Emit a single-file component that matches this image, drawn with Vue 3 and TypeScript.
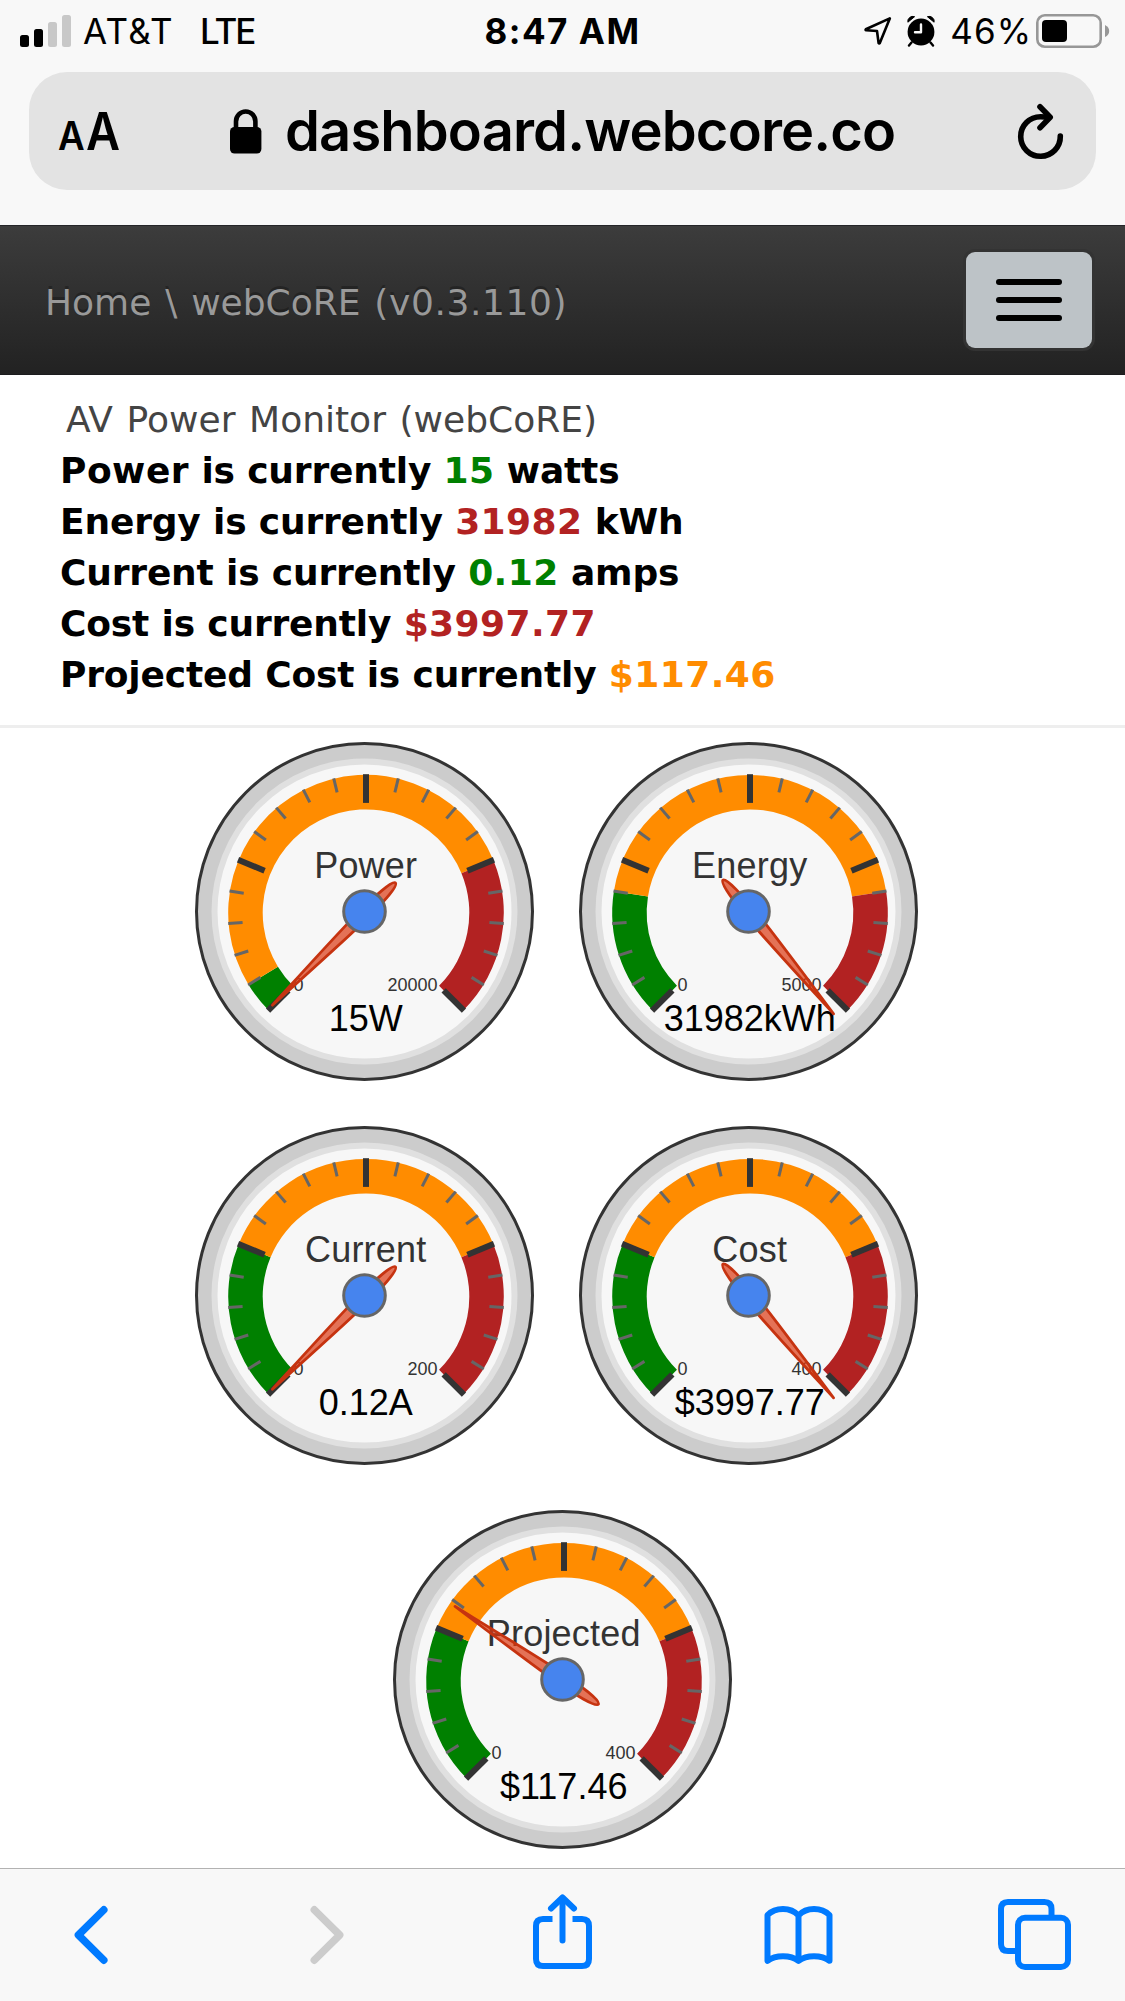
<script setup lang="ts">
interface Band {
  from: number
  to: number
  color: string
}

interface Gauge {
  title: string
  label: string
  value: number
  max: number
  green: number
  red: number
}

interface Reading {
  name: string
  value: string
  unit: string
  tone: string
}

const readings: Reading[] = [
  { name: 'Power', value: '15', unit: ' watts', tone: 'ok' },
  { name: 'Energy', value: '31982', unit: ' kWh', tone: 'high' },
  { name: 'Current', value: '0.12', unit: ' amps', tone: 'ok' },
  { name: 'Cost', value: '$3997.77', unit: '', tone: 'high' },
  { name: 'Projected Cost', value: '$117.46', unit: '', tone: 'warn' },
]

const gaugeRows: Gauge[][] = [
  [
    { title: 'Power', label: '15W', value: 15, max: 20000, green: 0.05, red: 0.75 },
    { title: 'Energy', label: '31982kWh', value: 31982, max: 5000, green: 0.2, red: 0.8 },
  ],
  [
    { title: 'Current', label: '0.12A', value: 0.12, max: 200, green: 0.25, red: 0.75 },
    { title: 'Cost', label: '$3997.77', value: 3997.77, max: 400, green: 0.25, red: 0.75 },
  ],
  [{ title: 'Projected', label: '$117.46', value: 117.46, max: 400, green: 0.25, red: 0.75 }],
]

// The dial sweeps 270 degrees clockwise, starting at the lower left.
const START = 135
const SWEEP = 270

const angleOf = (fraction: number): number => START + SWEEP * fraction

const point = (radius: number, fraction: number): string => {
  const a = (angleOf(fraction) * Math.PI) / 180
  return `${(radius * Math.cos(a)).toFixed(2)} ${(radius * Math.sin(a)).toFixed(2)}`
}

const bandPath = ({ from, to }: Band): string => {
  const outer = 137.8
  const inner = 103.3
  const large = (to - from) * SWEEP > 180 ? 1 : 0
  return (
    `M${point(outer, from)}A${outer} ${outer} 0 ${large} 1 ${point(outer, to)}` +
    `L${point(inner, to)}A${inner} ${inner} 0 ${large} 0 ${point(inner, from)}Z`
  )
}

const bandsOf = (g: Gauge): Band[] => [
  { from: 0, to: g.green, color: '#008000' },
  { from: g.green, to: g.red, color: '#ff8c00' },
  { from: g.red, to: 1, color: '#b22222' },
]

// Values beyond the scale rest slightly past the last tick.
const needleAngle = (g: Gauge): number => angleOf(Math.min(g.value / g.max, 1.02))

const ticks = Array.from({ length: 21 }, (_, i) => ({ angle: angleOf(i / 20), major: i % 5 === 0 }))
const minorTicks = ticks.filter((t) => !t.major)
const majorTicks = ticks.filter((t) => t.major)
</script>

<template>
  <div class="screen">
    <header class="chrome">
      <div class="status">
        <div class="side">
          <svg class="signal" width="51" height="32" viewBox="0 0 51 32">
            <rect x="0" y="20" width="9" height="12" rx="2.5" />
            <rect x="14" y="14" width="9" height="18" rx="2.5" />
            <rect class="weak" x="28" y="7" width="9" height="25" rx="2.5" />
            <rect class="weak" x="42" y="0" width="9" height="32" rx="2.5" />
          </svg>
          <span class="carrier">AT&amp;T</span>
          <span class="network">LTE</span>
        </div>
        <div class="clock">8:47 AM</div>
        <div class="side right">
          <svg class="location" width="28" height="30" viewBox="0 0 28 30">
            <path d="M25.8 2.4 L1.8 13.3 Q1.2 14 2.2 14.2 L13 15 L14.6 27 Q15.2 28 15.8 27 Z" fill="none" stroke="#000" stroke-width="2.6" stroke-linejoin="round" />
          </svg>
          <svg class="alarm" width="28" height="32" viewBox="0 0 28 32">
            <circle cx="14" cy="17" r="13.4" />
            <path d="M.9 7.2A5 5 0 0 1 7.6 1.7Z M27.1 7.2A5 5 0 0 0 20.4 1.7Z" stroke="#000" stroke-linejoin="round" />
            <path d="M4.5 27.5 2 30.5M23.5 27.5 26 30.5" stroke="#000" stroke-width="2.4" stroke-linecap="round" />
            <path d="M14 9.5V17.3H8" fill="none" stroke="#f8f8f8" stroke-width="2.4" stroke-linecap="round" stroke-linejoin="round" />
          </svg>
          <span class="percent">46%</span>
          <svg class="battery" width="74" height="34" viewBox="0 0 74 34">
            <rect x="1.3" y="1.3" width="63.4" height="31.4" rx="7.5" fill="none" stroke="#979797" stroke-width="2.6" />
            <rect x="6" y="6" width="25" height="22" rx="4" />
            <path d="M69 11Q73.2 13 73.2 17T69 23Z" fill="#979797" />
          </svg>
        </div>
      </div>
      <div class="address">
        <div class="reader"><span class="small">A</span><span class="large">A</span></div>
        <div class="site">
          <svg class="lock" width="32" height="45" viewBox="0 0 32 45">
            <rect x="0" y="18" width="31.4" height="26.6" rx="4.5" />
            <path d="M6 19V12.5a9.7 10 0 0 1 19.4 0V19" fill="none" stroke="#000" stroke-width="4.6" />
          </svg>
          <span class="url">dashboard.webcore.co</span>
        </div>
        <svg class="reload" width="50" height="60" viewBox="0 0 50 60">
          <g fill="none" stroke="#000" stroke-width="5.6" stroke-linecap="round" stroke-linejoin="round">
            <path d="M33.5 16.6Q30 15.7 25.5 15.7A19.8 19.8 0 1 0 45.3 35" />
            <path d="M25 5.8 35.2 16.3 25 26.7" />
          </g>
        </svg>
      </div>
    </header>

    <nav class="navbar">
      <span class="crumbs">Home \ webCoRE <span class="version">(v0.3.110)</span></span>
      <button class="menu" type="button" aria-label="Menu"><i></i><i></i><i></i></button>
    </nav>

    <main class="content">
      <section class="summary">
        <h1>AV Power Monitor (webCoRE)</h1>
        <p v-for="r in readings" :key="r.name">
          <span :class="{ loose: r.name === 'Power' }">{{ r.name }}</span> is currently
          <span class="figure" :class="r.tone">{{ r.value }}</span>{{ r.unit }}
        </p>
      </section>

      <section class="gauges">
        <div v-for="(row, i) in gaugeRows" :key="i" class="row" :class="{ pair: row.length > 1 }">
          <svg v-for="g in row" :key="g.title" class="gauge" width="384" height="384" viewBox="-191.5 -183.5 384 384">
            <circle r="168" fill="#ccc" stroke="#333" stroke-width="3" />
            <circle r="150" fill="#f7f7f7" stroke="#e0e0e0" stroke-width="6" />
            <g transform="translate(1.5 1.2)">
              <path v-for="b in bandsOf(g)" :key="b.color" :d="bandPath(b)" :fill="b.color" />
              <line v-for="t in minorTicks" :key="t.angle" x1="123.8" x2="138.2" stroke="#666" stroke-width="3" :transform="`rotate(${t.angle})`" />
              <line v-for="t in majorTicks" :key="t.angle" x1="109.8" x2="138.5" stroke="#333" stroke-width="6" :transform="`rotate(${t.angle})`" />
            </g>
            <text class="title" x="1.2" y="-33.2">{{ g.title }}</text>
            <text class="value" x="1.2" y="119.2">{{ g.label }}</text>
            <text class="limit" x="-71" y="79.5">0</text>
            <text class="limit end" x="73" y="79.5">{{ g.max }}</text>
            <path
              :transform="`translate(1.2 1) rotate(${needleAngle(g)})`"
              d="M131.5 0C80 2.5 40 4.6 10 5.2C-18 5.6-42 4-42 0C-42-4-18-5.6 10-5.2C40-4.6 80-2.5 131.5 0Z"
              fill="#dc3912"
              fill-opacity=".7"
              stroke="#c63310"
              stroke-width="2.8"
              stroke-linejoin="round"
            />
            <circle r="20.8" fill="#4684ee" stroke="#666" stroke-width="3" />
          </svg>
        </div>
      </section>
    </main>

    <footer class="toolbar">
      <svg width="80" height="132" viewBox="-40 -66 80 132">
        <path d="M12.8 -25.2-12.6 0 12.8 25.2" class="chevron" />
      </svg>
      <svg width="80" height="132" viewBox="-40 -66 80 132">
        <path d="M-12.7 -25.2 12.7 0-12.7 25.2" class="chevron off" />
      </svg>
      <svg width="80" height="132" viewBox="-39.5 -66 80 132">
        <path d="M-10-16H-19.5Q-26.5-16-26.5-9V24Q-26.5 31-19.5 31H19.5Q26.5 31 26.5 24V-9Q26.5-16 19.5-16H10" />
        <path d="M0-36V5.5" stroke-linecap="round" />
        <path d="M-11.5-26.5 0-37.5 11.5-26.5" stroke-linecap="round" stroke-linejoin="round" />
      </svg>
      <svg width="80" height="132" viewBox="-39.5 -66 80 132">
        <path d="M-31 25.8V-20Q-25-26-15.5-26T0-19.5Q6-26 15.5-26T31-20V25.8Q25 21.2 15.5 21.2T0 26Q-6 21.2-15.5 21.2T-31 25.8ZM0-19.5V26" stroke-linejoin="round" />
      </svg>
      <svg width="80" height="132" viewBox="-39.5 -66 80 132">
        <path d="M-16.5 16H-26.5Q-33.5 16-33.5 9V-26Q-33.5-33-26.5-33H10Q17-33 17-26V-17" />
        <rect x="-16.5" y="-17.3" width="50" height="49.3" rx="7" />
      </svg>
    </footer>
  </div>
</template>

<style>
body {
  margin: 0;
}
</style>

<style scoped>
.screen {
  display: flex;
  flex-direction: column;
  width: 1125px;
  height: 2001px;
  overflow: hidden;
  background: #fff;
}
.chrome {
  height: 225px;
  background: #f8f8f8;
  font-family: Inter, "Liberation Sans", sans-serif;
  color: #000;
}
.status {
  display: grid;
  grid-template-columns: 1fr auto 1fr;
  align-items: center;
  height: 61px;
  padding: 0 15px 0 20px;
  box-sizing: border-box;
  font-size: 35px;
  line-height: 42px;
}
.side {
  display: flex;
  align-items: center;
}
.side.right {
  justify-content: flex-end;
}
.weak {
  fill: #c8c8c8;
}
.carrier {
  margin-left: 12px;
  letter-spacing: 1.3px;
}
.network {
  margin-left: 26px;
  letter-spacing: -2px;
  font-weight: 500;
}
.clock {
  margin-right: 5px;
  font-weight: 700;
  letter-spacing: 1.5px;
}
.alarm {
  margin: 0 15px 0 15px;
}
.percent {
  letter-spacing: 1px;
}
.battery {
  margin-left: 4px;
}
.address {
  display: flex;
  align-items: center;
  width: 1067px;
  height: 118px;
  margin: 11px auto 0;
  border-radius: 38px;
  background: #e3e3e3;
}
.reader {
  display: flex;
  align-items: baseline;
  width: 201px;
  padding-left: 28.5px;
  box-sizing: border-box;
  font-weight: 600;
}
.small,
.large {
  display: inline-block;
  transform-origin: left;
}
.small {
  font-size: 39px;
  transform: scaleX(0.94);
}
.large {
  font-size: 52px;
  transform: scaleX(0.9);
}
.site {
  display: flex;
  align-items: center;
  flex: 1;
}
.url {
  margin-left: 23px;
  font-size: 56px;
  font-weight: 600;
  letter-spacing: -0.85px;
}
.reload {
  margin-right: 31px;
}
.navbar {
  display: flex;
  align-items: center;
  justify-content: space-between;
  height: 150px;
  padding: 0 33px 0 45px;
  box-sizing: border-box;
  border-top: 1px solid #242528;
  border-bottom: 1px solid #1c1c1e;
  background: linear-gradient(#3c3c3c, #222);
}
.crumbs {
  padding-top: 5px;
  font: 36px/54px "DejaVu Sans", sans-serif;
  word-spacing: 2.4px;
  color: #999;
  text-shadow: 0 -3px 0 rgba(0, 0, 0, 0.25);
}
.version {
  letter-spacing: 0.6px;
}
.menu {
  display: flex;
  flex-direction: column;
  align-items: center;
  justify-content: center;
  gap: 12px;
  width: 126px;
  height: 96px;
  padding: 0;
  border: 0;
  border-radius: 9px;
  background: #bdc3c7;
  box-shadow: 0 0 0 3px #333;
}
.menu i {
  width: 66px;
  height: 6px;
  border-radius: 3px;
  background: #000;
}
.content {
  flex: none;
  height: 1493px;
}
.summary {
  height: 353px;
  padding: 19px 60px 0;
  box-sizing: border-box;
  border-bottom: 3px solid #eee;
  font: 700 36px/51px "DejaVu Sans", sans-serif;
  color: #000;
}
.summary h1 {
  margin: 0 0 0 6px;
  font: inherit;
  font-weight: 400;
  word-spacing: 2.2px;
  color: #444;
}
.summary p {
  margin: 0;
  letter-spacing: -0.17px;
  white-space: nowrap;
}
.loose {
  letter-spacing: 0.5px;
}
.figure {
  letter-spacing: 0.4px;
}
.ok {
  color: #008000;
}
.high {
  color: #b22222;
}
.warn {
  color: #ff8c00;
}
.row {
  display: flex;
  justify-content: center;
}
.row.pair {
  padding-right: 12px;
}
.gauge {
  display: block;
}
.gauge text {
  font-family: "Liberation Sans", Arial, sans-serif;
  font-size: 36px;
  text-anchor: middle;
}
.gauge .title {
  fill: #333;
  letter-spacing: 0.2px;
}
.gauge .limit {
  font-size: 18px;
  fill: #333;
  text-anchor: start;
}
.gauge .limit.end {
  text-anchor: end;
}
.toolbar {
  display: flex;
  justify-content: space-between;
  flex: none;
  height: 133px;
  padding: 0 50.5px;
  box-sizing: border-box;
  border-top: 1px solid #b2b2b2;
  background: #f8f8f8;
}
.toolbar path,
.toolbar rect {
  fill: none;
  stroke: #007aff;
  stroke-width: 6px;
}
.toolbar .chevron {
  stroke-width: 7.5px;
  stroke-linecap: round;
  stroke-linejoin: round;
}
.toolbar .off {
  stroke: #ccc;
}
</style>
